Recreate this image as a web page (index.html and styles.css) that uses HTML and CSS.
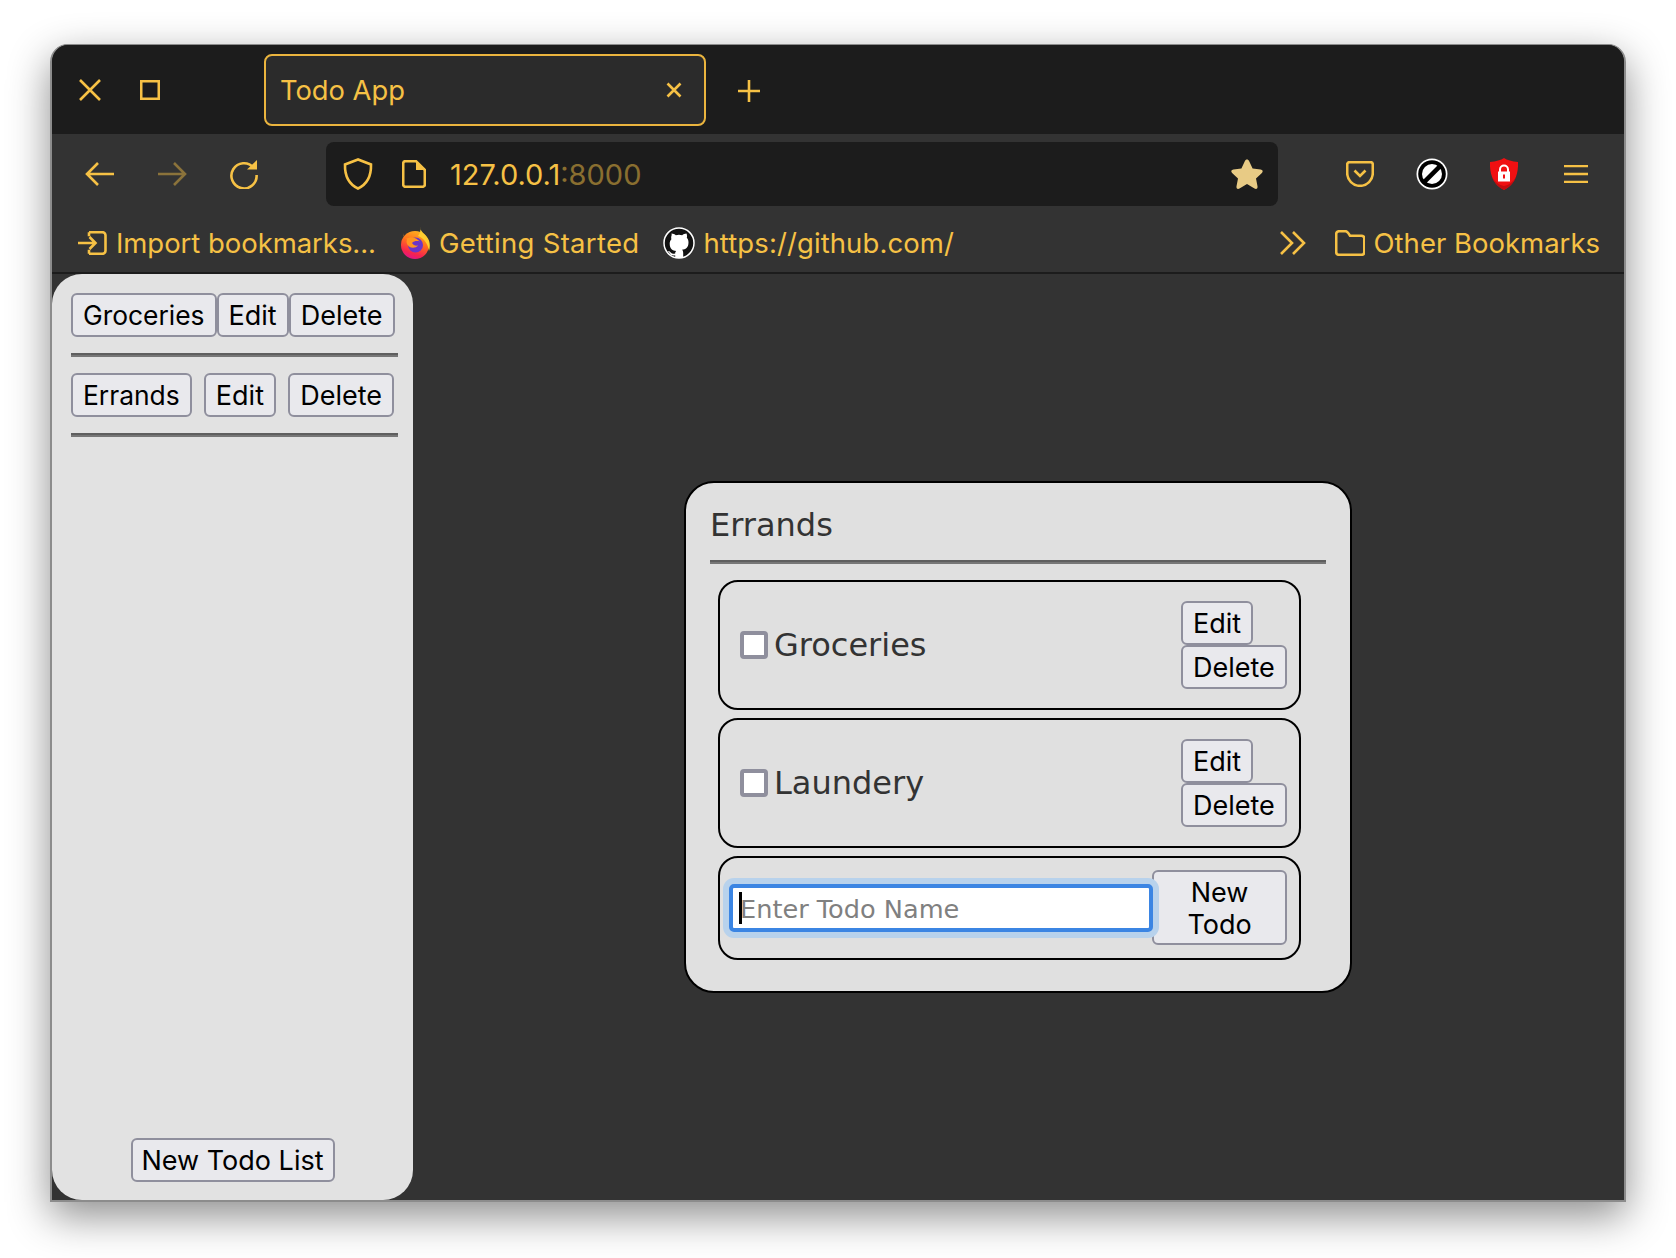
FILE: index.html
```html
<!DOCTYPE html>
<html lang="en">
<head>
  <meta charset="UTF-8">
  <title>Todo App</title>
  <link rel="stylesheet" href="styles.css">
</head>
<body>
<div class="window">

  <div class="titlebar">
    <svg class="icon win-close" width="22" height="22" viewBox="0 0 22 22"><path d="M1 1l20 20M21 1L1 21"/></svg>
    <svg class="icon win-max" width="20" height="20" viewBox="0 0 20 20"><rect x="1.2" y="1.2" width="17.6" height="17.6"/></svg>
    <div class="tab">
      <span class="tab-title">Todo App</span>
      <svg class="icon" width="16" height="16" viewBox="0 0 16 16"><path d="M1.5 1.5l13 13M14.5 1.5l-13 13"/></svg>
    </div>
    <svg class="icon new-tab" width="24" height="24" viewBox="0 0 24 24"><path d="M12 1v22M1 12h22"/></svg>
  </div>

  <div class="toolbar">
    <svg class="icon back" width="30" height="26" viewBox="0 0 30 26"><path d="M29 13H2M13 2L2 13l11 11"/></svg>
    <svg class="icon forward" width="30" height="26" viewBox="0 0 30 26"><path d="M1 13h27M17 2l11 11-11 11"/></svg>
    <svg class="icon reload" width="30" height="30" viewBox="0 0 30 30"><path d="M24.5 8.5A12.6 12.6 0 1 0 27.6 16"/><path class="fill" d="M18 10.500h10V1z"/></svg>
    <div class="urlbar">
      <svg class="icon shield" width="30" height="32" viewBox="0 0 30 32"><path d="M15 1.500L2 6.500c-.3 11 3.500 19.500 13 24 9.500-4.500 13.300-13 13-24z"/></svg>
      <svg class="icon page" width="24" height="28" viewBox="0 0 24 28"><path d="M3.500 1.200h10.500l8.800 8.800v14.500a2.300 2.300 0 0 1-2.300 2.300h-17a2.300 2.300 0 0 1-2.300-2.300V3.500a2.300 2.300 0 0 1 2.300-2.300z"/><path class="fill" d="M14 1.200l8.800 8.800H14z"/></svg>
      <span class="url">127.0.0.1<span class="url-port">:8000</span></span>
      <svg class="star" width="34" height="32" viewBox="0 0 34 32"><path d="M17 1.500c1 0 1.700.6 2.200 1.700l3.400 7.300 8 1c2.200.3 2.800 2 1.300 3.400l-5.900 5.500 1.500 7.900c.4 2.200-1.100 3.200-3 2.200L17 26l-7.500 4.500c-1.900 1-3.400 0-3-2.200L8 20.400 2.100 14.900C.6 13.500 1.200 11.800 3.400 11.500l8-1 3.400-7.300c.5-1.100 1.200-1.700 2.200-1.700z"/></svg>
    </div>
    <svg class="icon pocket" width="28" height="26" viewBox="0 0 28 26"><path d="M3.500 1.200h21a2.300 2.300 0 0 1 2.300 2.300v8.500a12.800 12.800 0 0 1-25.600 0V3.500a2.300 2.300 0 0 1 2.300-2.300z"/><path d="M8.500 9.500l5.500 5.500 5.500-5.500"/></svg>
    <svg class="addon-block" width="32" height="32" viewBox="0 0 32 32"><circle cx="16" cy="16" r="15.500" fill="#fff"/><circle cx="16" cy="16" r="13.800" fill="#000"/><circle cx="16" cy="16" r="10" fill="#fff"/><path d="M6.500 22.500L22.500 6.500l3.200 3.200L9.700 25.700z" fill="#000"/></svg>
    <svg class="addon-shield" width="28" height="32" viewBox="0 0 28 32"><path d="M14 0c3 2 8 3.500 14 4 .5 12-3 22.500-14 28C3 26.500-.5 16 0 4 6 3.500 11 2 14 0z" fill="#f01012"/><path d="M14 32c6-3 10-7.500 12-13-3 5-7 8-12 9-5-1-9-4-12-9 2 5.500 6 10 12 13z" fill="#c40c0e"/><path d="M8 13.500h12v10H8z" fill="#fff"/><path d="M10 14v-2.500a4 4 0 0 1 8 0V14" fill="none" stroke="#fff" stroke-width="2"/><rect x="13" y="16.500" width="2" height="4" fill="#f01012"/></svg>
    <svg class="icon menu" width="24" height="18" viewBox="0 0 24 18"><path d="M0 1h24M0 9h24M0 17h24"/></svg>
  </div>

  <div class="bookmarks">
    <div class="bookmark import">
      <svg class="icon" width="30" height="24" viewBox="0 0 30 24"><path d="M12 1.200h13.500a3 3 0 0 1 3 3v15.600a3 3 0 0 1-3 3H12"/><path d="M1 12h17M12.500 6l6 6-6 6M12 1.200v4M12 18.800v4"/></svg>
      <span>Import bookmarks...</span>
    </div>
    <div class="bookmark firefox">
      <svg width="30" height="32" viewBox="0 0 30 32">
        <defs>
          <linearGradient id="ffBody" x1="0.7" y1="0" x2="0.35" y2="1"><stop offset="0" stop-color="#ffb51f"/><stop offset="0.45" stop-color="#ff6a1f"/><stop offset="0.8" stop-color="#f5234f"/><stop offset="1" stop-color="#e0148a"/></linearGradient>
        </defs>
        <circle cx="15" cy="18" r="14" fill="url(#ffBody)"/>
        <path d="M20 0c0 4 4 6 7 10 3 4 3.500 9 2 14-1-7-5-13-11-15 2-3 3-6 2-9z" fill="#ffcd2f"/>
        <circle cx="15.500" cy="18" r="7.500" fill="#6a35c8"/>
        <path d="M3.500 6c0 2.500 1 4.500 2.500 6 3-2 7-2 10-.5l4 3c-3-1-6-.5-8 1.500 1 2 3.500 3 6 2.500-2 2.500-6 3-9 1-2.500-2-3-5-2-7-2.500-1-4-3.500-3.500-6.500z" fill="#ff9420"/>
      </svg>
      <span>Getting Started</span>
    </div>
    <div class="bookmark github">
      <svg width="32" height="32" viewBox="0 0 32 32"><circle cx="16" cy="16" r="15" fill="#111" stroke="#fff" stroke-width="1.500"/><path d="M8.500 6.500c1.700 0 3.300.8 4.300 1.800a12 12 0 0 1 6.400 0c1-1 2.600-1.800 4.300-1.800.6 1.500.7 3 .3 4.300 1.200 1.300 1.700 2.800 1.700 4.600 0 5.200-3 6.800-6.500 7.300.8.700 1.200 1.700 1.200 3.200V31h-8v-2.800c-2.500.5-4.400 0-5.400-2-.6-1-1.300-1.600-2.300-2.200 1.700-.3 2.800.8 3.500 1.700.9 1.100 2.400 1.100 4.200.7 0-1.100.4-1.800 1-2.300-3.500-.5-6.500-2.100-6.500-7.300 0-1.800.5-3.300 1.700-4.600-.4-1.300-.3-2.800.3-4.300z" fill="#fff"/></svg>
      <span>https://github.com/</span>
    </div>
    <svg class="icon more" width="26" height="24" viewBox="0 0 26 24"><path d="M1 1l11 11L1 23M13 1l11 11-11 11"/></svg>
    <div class="bookmark other">
      <svg class="icon" width="30" height="26" viewBox="0 0 30 26"><path d="M1.200 4a2.800 2.800 0 0 1 2.800-2.800h6.500c1.500 0 2.200 1 3 2.200l1.500 2.300h11.500a2.800 2.800 0 0 1 2.800 2.800V22a2.800 2.800 0 0 1-2.800 2.800H4A2.800 2.800 0 0 1 1.200 22z"/></svg>
      <span>Other Bookmarks</span>
    </div>
  </div>

  <div class="main">
    <div class="sidebar">
      <div class="lists">
        <div class="list-row">
          <button class="list-name">Groceries</button>
          <button>Edit</button>
          <button>Delete</button>
        </div>
        <hr>
        <div class="list-row">
          <button class="list-name">Errands</button>
          <button>Edit</button>
          <button>Delete</button>
        </div>
        <hr>
      </div>
      <button class="new-list">New Todo List</button>
    </div>

    <div class="content">
      <div class="panel">
        <h2>Errands</h2>
        <hr>
        <div class="card todo">
          <label class="todo-label"><input type="checkbox">Groceries</label>
          <div class="todo-actions">
            <button>Edit</button>
            <button>Delete</button>
          </div>
        </div>
        <div class="card todo">
          <label class="todo-label"><input type="checkbox">Laundery</label>
          <div class="todo-actions">
            <button>Edit</button>
            <button>Delete</button>
          </div>
        </div>
        <div class="card new-todo">
          <div class="name-field">
            <input type="text" placeholder="Enter Todo Name">
            <span class="caret"></span>
          </div>
          <button class="add-todo">New Todo</button>
        </div>
      </div>
    </div>
  </div>

</div>
</body>
</html>
```

FILE: styles.css
```css
html {
  height: 100%;
}

body {
  box-sizing: border-box;
  min-height: 100vh;
  margin: 0;
  padding: 44px 0 0 50px;
  overflow: hidden;
  background-color: #fff;
  font-family: Inter, "Liberation Sans", sans-serif;
}

.window {
  box-sizing: border-box;
  width: 1576px;
  height: 1158px;
  border: 2px solid #8c8c8c;
  border-top-width: 1px;
  border-radius: 18px 18px 0 0;
  overflow: hidden;
  background-color: #333;
  box-shadow: 0 14px 42px rgba(0,0,0,0.45);
  display: flex;
  flex-direction: column;
  color: #f6c145;
}

.icon {
  flex: none;
  fill: none;
  stroke: currentColor;
  stroke-width: 2.6;
}

.icon .fill {
  fill: currentColor;
  stroke: none;
}

.titlebar {
  height: 89px;
  flex: none;
  background-color: #1c1c1c;
  display: flex;
  align-items: center;
}

.win-close {
  margin-left: 27px;
}

.win-max {
  margin-left: 39px;
}

.tab {
  box-sizing: border-box;
  width: 442px;
  height: 72px;
  margin-left: 104px;
  padding: 0 22px 0 14px;
  background-color: #2b2b2b;
  border: 2px solid #eab43e;
  border-radius: 8px;
  display: flex;
  align-items: center;
  justify-content: space-between;
}

.tab-title {
  margin-top: 1px;
  font-size: 27.300px;
}

.new-tab {
  margin: 2px 0 0 31px;
}

.toolbar {
  box-sizing: border-box;
  height: 84px;
  flex: none;
  padding-bottom: 4px;
  display: flex;
  align-items: center;
}

.back {
  margin-left: 33px;
}

.forward {
  margin-left: 42px;
  opacity: 0.45;
}

.reload {
  margin-left: 42px;
}

.urlbar {
  box-sizing: border-box;
  width: 952px;
  height: 64px;
  margin-left: 67px;
  padding: 0 14px 0 17px;
  background-color: #1c1c1c;
  border-radius: 8px;
  display: flex;
  align-items: center;
}

.page {
  margin-left: 29px;
}

.url {
  margin-left: 24px;
  font-size: 29px;
}

.url-port {
  opacity: 0.5;
}

.star {
  margin-left: auto;
  fill: #e8cb85;
}

.pocket {
  margin-left: 68px;
}

.addon-block {
  margin-left: 42px;
}

.addon-shield {
  margin-left: 42px;
}

.menu {
  margin-left: 46px;
}

.bookmarks {
  box-sizing: border-box;
  height: 56px;
  flex: none;
  padding: 0 24px 4px 25px;
  border-bottom: 2px solid #1c1c1c;
  display: flex;
  align-items: center;
  font-size: 27.500px;
}

.bookmark {
  display: flex;
  align-items: center;
}

.import span {
  margin-left: 9px;
  letter-spacing: -0.05px;
}

.firefox {
  margin-left: 24px;
}

.firefox span {
  margin-left: 9px;
  letter-spacing: 0.3px;
}

.github {
  margin-left: 24px;
}

.github span {
  margin-left: 8px;
  letter-spacing: 0.1px;
}

.more {
  margin-left: auto;
}

.other {
  margin-left: 29px;
}

.other span {
  margin-left: 9px;
}

.main {
  flex: 1;
  display: flex;
  min-height: 0;
}

button {
  box-sizing: border-box;
  height: 44px;
  padding: 0 10px;
  background-color: #e9e9ed;
  border: 2px solid #8f8f9d;
  border-radius: 6px;
  color: #000;
  font-family: Inter, "Liberation Sans", sans-serif;
  font-size: 27px;
}

.list-name {
  font-size: 26.400px;
}

hr {
  height: 4px;
  margin: 0;
  border: none;
  border-top: 2px solid #5f5f5f;
  border-bottom: 2px solid #777;
  box-sizing: border-box;
}

.sidebar {
  box-sizing: border-box;
  width: 361px;
  flex: none;
  padding: 19px 15px 18px 19px;
  background-color: #e2e2e2;
  border-radius: 30px;
  display: flex;
  flex-direction: column;
  justify-content: space-between;
}

.list-row {
  padding-right: 4px;
  display: flex;
  justify-content: space-between;
}

.lists hr {
  margin: 16px 0;
}

.new-list {
  align-self: center;
  width: 204px;
  margin-right: 4px;
  padding: 0;
  white-space: nowrap;
}

.content {
  flex: 1;
  padding: 0 1px 0 0;
  display: flex;
  justify-content: center;
  align-items: center;
}

.panel {
  box-sizing: border-box;
  width: 668px;
  padding: 0 24px 31px 24px;
  background-color: #e0e0e0;
  border: 2px solid #000;
  border-radius: 30px;
  color: #333;
  font-family: "DejaVu Sans", sans-serif;
}

.panel h2 {
  margin: 0;
  padding: 22px 0 15px 0;
  font-size: 32px;
  font-weight: normal;
  line-height: 40px;
}

.card {
  box-sizing: border-box;
  width: 583px;
  margin: 8px 0 0 8px;
  border: 2px solid #000;
  border-radius: 20px;
  display: flex;
  align-items: center;
}

.panel hr + .card {
  margin-top: 16px;
}

.todo {
  padding: 19px 12px 19px 20px;
  justify-content: space-between;
}

.todo-label {
  display: flex;
  align-items: center;
  font-size: 32px;
}

.todo-label input {
  box-sizing: border-box;
  width: 28px;
  height: 28px;
  margin: 0 6px 0 0;
  appearance: none;
  background-color: #fff;
  border: 4px solid #8f8f9d;
  border-radius: 4px;
}

.todo-actions {
  width: 106px;
  display: flex;
  flex-direction: column;
  align-items: flex-start;
}

.new-todo {
  padding: 12px 12px 13px 9px;
}

.name-field {
  position: relative;
  flex: 1;
  display: flex;
}

.name-field input {
  box-sizing: border-box;
  width: 100%;
  height: 48px;
  padding: 2px 6px 0 7px;
  background-color: #fff;
  border: 4px solid #3b85e3;
  border-radius: 5px;
  box-shadow: 0 0 0 6px #b8d2ec;
  outline: none;
  font-family: "DejaVu Sans", sans-serif;
  font-size: 25.600px;
}

.name-field input::placeholder {
  color: #808080;
  opacity: 1;
}

.caret {
  position: absolute;
  left: 10px;
  top: 8px;
  width: 3px;
  height: 32px;
  background-color: #000;
}

.add-todo {
  width: 135px;
  height: 75px;
  margin-left: -1px;
  padding-top: 2px;
  line-height: 32px;
}
```
